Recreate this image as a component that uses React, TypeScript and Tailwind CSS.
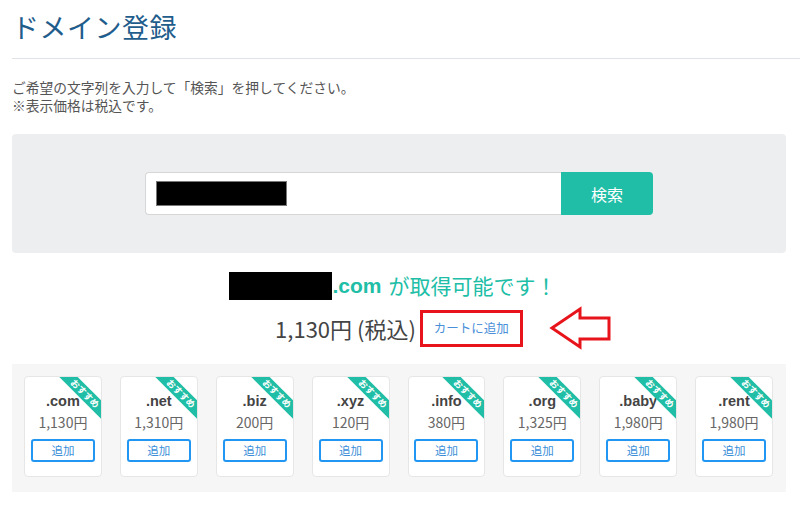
import React from "react";

const jp = { fontFamily: '"Noto Sans CJK JP", sans-serif' };
const latin = { fontFamily: '"Liberation Sans", "Noto Sans CJK JP", sans-serif' };

const domains = [
  { tld: ".com", price: "1,130円" },
  { tld: ".net", price: "1,310円" },
  { tld: ".biz", price: "200円" },
  { tld: ".xyz", price: "120円" },
  { tld: ".info", price: "380円" },
  { tld: ".org", price: "1,325円" },
  { tld: ".baby", price: "1,980円" },
  { tld: ".rent", price: "1,980円" },
];

function Card({ tld, price }: { tld: string; price: string }) {
  return (
    <div className="relative w-[78px] h-[101px] bg-white border border-[#e6e6e6] rounded-[4px] overflow-hidden flex flex-col items-center">
      <div
        className="absolute right-[-15px] top-[10px] w-[62px] h-[13px] bg-[#20bea6] rotate-45 text-white text-[9px] leading-[13px] font-bold text-center"
        style={jp}
      >
        おすすめ
      </div>
      <div className="mt-[14px] h-[20px] leading-[20px] text-[14.5px] font-bold text-[#444]" style={latin}>
        {tld}
      </div>
      <div className="h-[22px] leading-[22px] text-[14px] text-[#666]" style={jp}>
        {price}
      </div>
      <div
        className="mt-[6px] w-[64px] h-[23px] border-2 border-[#2196f3] rounded-[3px] flex items-center justify-center text-[11.5px] text-[#3b8fd9]"
        style={jp}
      >
        追加
      </div>
    </div>
  );
}

export default function App() {
  return (
    <div className="w-[800px] h-[507px] overflow-hidden bg-white pl-[12px] pr-[14px]" style={jp}>
      <h1 className="pt-[9px] h-[45px] text-[27px] leading-[36px] text-[#1f5d8c] font-normal tracking-[0.5px]">
        ドメイン登録
      </h1>
      <div className="mt-[13px] h-px bg-[#dfe2e6] mr-[-14px]" />
      <div className="mt-[19px] text-[13.75px] leading-[18px] text-[#555]">
        <p>ご希望の文字列を入力して「検索」を押してください。</p>
        <p>※表示価格は税込です。</p>
      </div>
      <div className="mt-[20px] h-[119px] bg-[#edeef0] rounded-[4px] flex items-center justify-center">
        <div className="flex h-[43px] w-[508px]">
          <div className="flex-1 bg-white border border-[#d6d6d6] border-r-0 rounded-l-[4px] flex items-center pl-[10px]">
            <div className="w-[131px] h-[25px] bg-black border border-[#777]" />
          </div>
          <div className="w-[92px] bg-[#20bea6] rounded-r-[4px] flex items-center justify-center text-white text-[16px]">
            検索
          </div>
        </div>
      </div>
      <div className="mt-[19px] h-[28px] pr-[12px] flex items-center justify-center text-[#20bea6] text-[21px]">
        <span className="inline-block w-[103px] h-[28px] bg-black" />
        <span className="font-bold" style={latin}>.com</span>
        <span className="ml-[7px]">が取得可能です！</span>
      </div>
      <div className="relative mt-[10px] h-[37px] flex items-center justify-center">
        <span className="text-[22px] text-[#444] leading-[37px]">1,130円 (税込)</span>
        <span className="ml-[4px] w-[103px] h-[37px] border-[3px] border-[#e8141c] flex items-center justify-center text-[12.5px] text-[#4a90d9]">
          カートに追加
        </span>
        <svg
          className="absolute left-[537px] top-[-4px]"
          width="64"
          height="44"
          viewBox="0 0 64 44"
        >
          <polygon
            points="3,22 31,3 31,12 60,12 60,33 31,33 31,41"
            fill="white"
            stroke="#e8141c"
            strokeWidth="3"
            strokeLinejoin="miter"
          />
        </svg>
      </div>
      <div className="mt-[17px] h-[128px] bg-[#f6f6f6] pt-[12px] pl-[12px] pr-[13px] flex gap-[18px]">
        {domains.map((d) => (
          <Card key={d.tld} tld={d.tld} price={d.price} />
        ))}
      </div>
    </div>
  );
}
